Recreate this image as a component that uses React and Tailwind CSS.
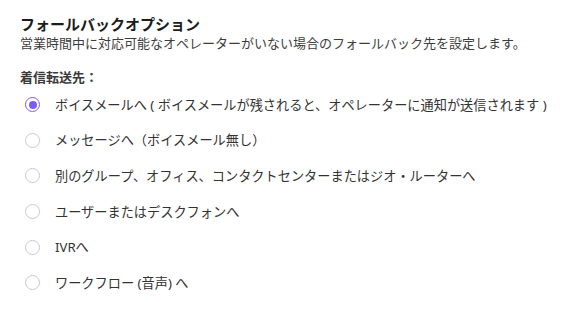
import React, { useState } from "react";

const options = [
  "ボイスメールへ ( ボイスメールが残されると、オペレーターに通知が送信されます )",
  "メッセージへ（ボイスメール無し）",
  "別のグループ、オフィス、コンタクトセンターまたはジオ・ルーターへ",
  "ユーザーまたはデスクフォンへ",
  "IVRへ",
  "ワークフロー (音声) へ",
];

export default function App() {
  const [selected, setSelected] = useState(0);

  return (
    <div
      className="w-[579px] h-[312px] bg-white pl-[20px] pt-[14px] text-[#2b2b2b]"
      style={{ fontFamily: '"Noto Sans", "Noto Sans CJK JP", sans-serif' }}
    >
      <h2 className="text-[15px] font-bold leading-[20px] text-[#1c1c1c]">
        フォールバックオプション
      </h2>
      <p className="text-[13px] leading-[18px] text-[#3d3d3d]">
        営業時間中に対応可能なオペレーターがいない場合のフォールバック先を設定します。
      </p>

      <div className="mt-[16px] text-[13px] font-semibold leading-[18px] text-[#3a3a3a]">
        着信転送先：
      </div>

      <div className="mt-[1px] flex flex-col">
        {options.map((label, i) => (
          <label
            key={i}
            className="flex h-[35.6px] items-center cursor-pointer"
            onClick={() => setSelected(i)}
          >
            <span
              className={`ml-[5px] flex h-[15px] w-[15px] items-center justify-center rounded-full ${
                selected === i
                  ? "border-[1.5px] border-[#7b5cf6]"
                  : "border border-[#c9c6d9]"
              }`}
            >
              {selected === i && (
                <span className="h-[8px] w-[8px] rounded-full bg-[#7b5cf6]" />
              )}
            </span>
            <span className="ml-[15px] text-[13.2px] leading-[18px] text-[#333]">
              {label}
            </span>
          </label>
        ))}
      </div>
    </div>
  );
}
